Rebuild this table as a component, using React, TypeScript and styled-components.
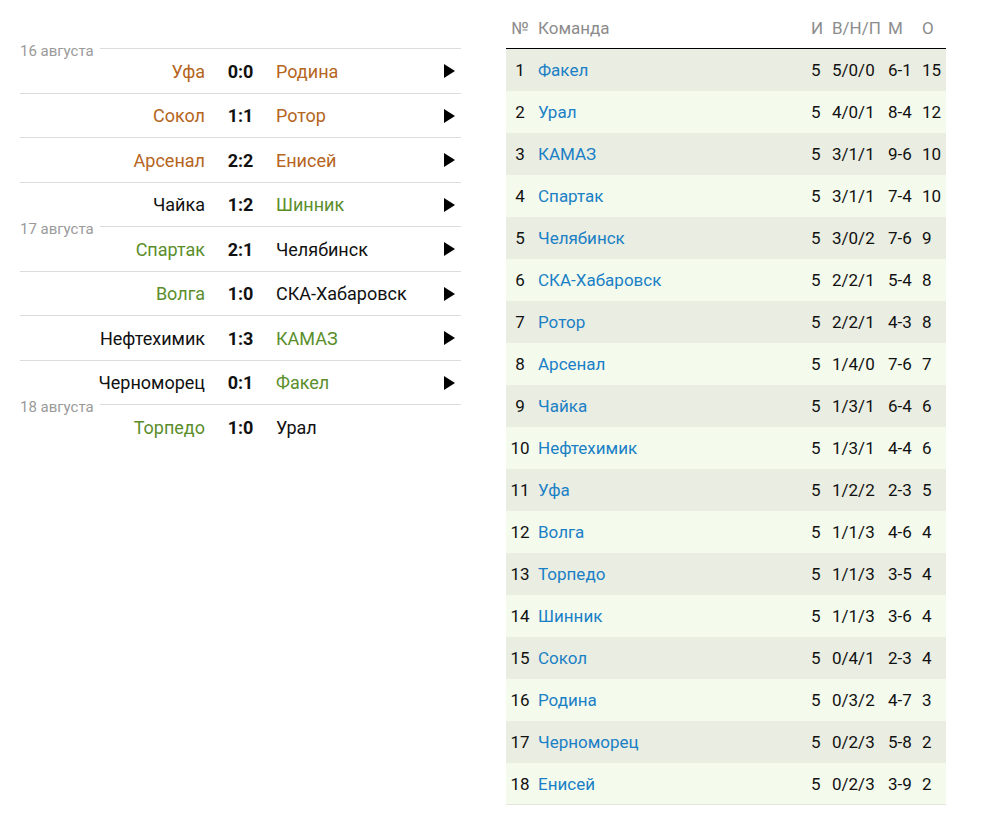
import styled, { createGlobalStyle } from "styled-components";

const GlobalStyle = createGlobalStyle`
  body {
    margin: 0;
    background: #fff;
    font-family: Roboto, "Liberation Sans", sans-serif;
  }
`;

type Result = "win" | "lose" | "draw";

const matches = [
  { date: "16 августа", home: "Уфа", score: "0:0", away: "Родина", arrow: true },
  { home: "Сокол", score: "1:1", away: "Ротор", arrow: true },
  { home: "Арсенал", score: "2:2", away: "Енисей", arrow: true },
  { home: "Чайка", score: "1:2", away: "Шинник", arrow: true },
  { date: "17 августа", home: "Спартак", score: "2:1", away: "Челябинск", arrow: true },
  { home: "Волга", score: "1:0", away: "СКА-Хабаровск", arrow: true },
  { home: "Нефтехимик", score: "1:3", away: "КАМАЗ", arrow: true },
  { home: "Черноморец", score: "0:1", away: "Факел", arrow: true },
  { date: "18 августа", home: "Торпедо", score: "1:0", away: "Урал", arrow: false },
];

const standings = [
  ["Факел", "5", "5/0/0", "6-1", "15"],
  ["Урал", "5", "4/0/1", "8-4", "12"],
  ["КАМАЗ", "5", "3/1/1", "9-6", "10"],
  ["Спартак", "5", "3/1/1", "7-4", "10"],
  ["Челябинск", "5", "3/0/2", "7-6", "9"],
  ["СКА-Хабаровск", "5", "2/2/1", "5-4", "8"],
  ["Ротор", "5", "2/2/1", "4-3", "8"],
  ["Арсенал", "5", "1/4/0", "7-6", "7"],
  ["Чайка", "5", "1/3/1", "6-4", "6"],
  ["Нефтехимик", "5", "1/3/1", "4-4", "6"],
  ["Уфа", "5", "1/2/2", "2-3", "5"],
  ["Волга", "5", "1/1/3", "4-6", "4"],
  ["Торпедо", "5", "1/1/3", "3-5", "4"],
  ["Шинник", "5", "1/1/3", "3-6", "4"],
  ["Сокол", "5", "0/4/1", "2-3", "4"],
  ["Родина", "5", "0/3/2", "4-7", "3"],
  ["Черноморец", "5", "0/2/3", "5-8", "2"],
  ["Енисей", "5", "0/2/3", "3-9", "2"],
];

const resultOf = (score: string, side: 0 | 1): Result => {
  const [a, b] = score.split(":").map(Number);
  if (a === b) return "draw";
  const mine = side === 0 ? a : b;
  const other = side === 0 ? b : a;
  return mine > other ? "win" : "lose";
};

const Page = styled.div`
  display: flex;
  align-items: flex-start;
  padding: 8px 0 0 20px;
`;

const Matches = styled.div`
  width: 441px;
  margin-top: 40px;
`;

const MatchRow = styled.div`
  position: relative;
  display: grid;
  grid-template-columns: 185px 71px 1fr 24px;
  align-items: center;
  box-sizing: border-box;
  height: 44.5px;
  padding-top: 1px;
  border-top: 1px solid #dcdcdc;
  font-size: 18px;
`;

const DateLabel = styled.span`
  position: absolute;
  left: 0;
  top: -6px;
  padding-right: 6px;
  background: #fff;
  color: #9a9a9a;
  font-size: 15px;
  line-height: 16px;
`;

const Team = styled.span<{ $result: Result; $right?: boolean }>`
  text-align: ${(p) => (p.$right ? "right" : "left")};
  white-space: nowrap;
  color: ${(p) =>
    p.$result === "draw" ? "#b5651d" : p.$result === "win" ? "#5b8e2b" : "#111"};
`;

const Score = styled.span`
  text-align: center;
  font-weight: 700;
  color: #111;
`;

const Arrow = styled.span`
  display: flex;
  justify-content: center;
`;

const Standings = styled.table`
  margin-left: 45px;
  width: 440px;
  border-collapse: collapse;
  table-layout: fixed;
  font-size: 17px;
  color: #111;
`;

const HeadCell = styled.th<{ $w: number; $center?: boolean }>`
  box-sizing: border-box;
  width: ${(p) => p.$w}px;
  height: 40px;
  padding: ${(p) => (p.$center ? "0" : "0 0 0 4px")};
  text-align: ${(p) => (p.$center ? "center" : "left")};
  font-weight: 400;
  color: #8c8c8c;
  border-bottom: 1px solid #000;
`;

const Row = styled.tr<{ $odd: boolean }>`
  background: ${(p) => (p.$odd ? "#eaede1" : "#f4fbed")};
  border-bottom: 1px solid ${(p) => (p.$odd ? "#eaede1" : "#f4fbed")};

  &:last-child {
    border-bottom-color: #e2e6dc;
  }
`;

const Cell = styled.td<{ $center?: boolean }>`
  height: 40px;
  padding: ${(p) => (p.$center ? "1px 0 0" : "1px 0 0 4px")};
  text-align: ${(p) => (p.$center ? "center" : "left")};
  white-space: nowrap;
`;

const TeamLink = styled.a`
  color: #1a80c6;
  text-decoration: none;
`;

const columns: [string, number][] = [
  ["№", 28],
  ["Команда", 273],
  ["И", 21],
  ["В/Н/П", 56],
  ["М", 34],
  ["О", 28],
];

const Triangle = () => (
  <svg width="11" height="14" viewBox="0 0 11 14">
    <path d="M0 0 L11 7 L0 14 Z" fill="#000" />
  </svg>
);

export default function App() {
  return (
    <>
      <GlobalStyle />
      <Page>
        <Matches>
          {matches.map((m) => (
            <MatchRow key={m.home}>
              {m.date && <DateLabel>{m.date}</DateLabel>}
              <Team $right $result={resultOf(m.score, 0)}>
                {m.home}
              </Team>
              <Score>{m.score}</Score>
              <Team $result={resultOf(m.score, 1)}>{m.away}</Team>
              <Arrow>{m.arrow && <Triangle />}</Arrow>
            </MatchRow>
          ))}
        </Matches>
        <Standings>
          <thead>
            <tr>
              {columns.map(([name, w], i) => (
                <HeadCell key={name} $w={w} $center={i === 0}>
                  {name}
                </HeadCell>
              ))}
            </tr>
          </thead>
          <tbody>
            {standings.map(([team, played, wdl, goals, pts], i) => (
              <Row key={team} $odd={i % 2 === 0}>
                <Cell $center>{i + 1}</Cell>
                <Cell>
                  <TeamLink href="#">{team}</TeamLink>
                </Cell>
                <Cell>{played}</Cell>
                <Cell>{wdl}</Cell>
                <Cell>{goals}</Cell>
                <Cell>{pts}</Cell>
              </Row>
            ))}
          </tbody>
        </Standings>
      </Page>
    </>
  );
}
